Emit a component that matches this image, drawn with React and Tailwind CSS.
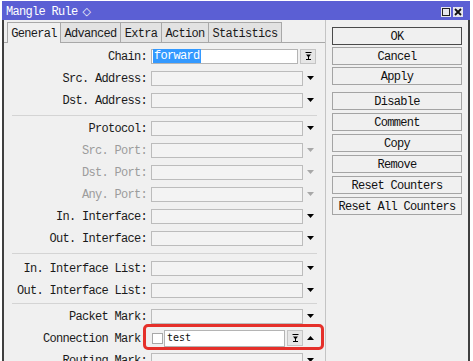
import React from "react";

const Down = ({ color = "#000" }) => (
  <svg width="7" height="4" viewBox="0 0 7 4"><path d="M0 0H7L3.5 4Z" fill={color} /></svg>
);
const Up = () => (
  <svg width="7" height="4" viewBox="0 0 7 4"><path d="M0 4H7L3.5 0Z" fill="#000" /></svg>
);
const DualIcon = () => (
  <svg width="7" height="8" viewBox="0 0 7 8">
    <rect x="0.5" y="0" width="6" height="1" fill="#000" />
    <path d="M1 2.5H6L3.5 5.5Z" fill="#000" />
    <rect x="3" y="5" width="1" height="2" fill="#000" />
    <rect x="1" y="7" width="5" height="1" fill="#000" />
  </svg>
);

function Row({ label, muted, children }) {
  return (
    <div className="flex h-[22px] items-center">
      <div className={muted ? "w-[143px] whitespace-pre pt-[1px] text-right text-[#9c9c9c]" : "w-[143px] whitespace-pre pt-[1px] text-right text-[#1a1a1a]"}>
        {label}
      </div>
      <div className="ml-[4px] flex items-center">{children}</div>
    </div>
  );
}

function DropField({ muted }) {
  return (
    <>
      <div className="h-[15px] w-[152px] border border-[#bcbcbc] bg-[#f3f3f3]" />
      <div className="flex w-[15px] justify-center">
        <Down color={muted ? "#a8a8a8" : "#000"} />
      </div>
    </>
  );
}

function Sep() {
  return <div className="mx-[8px] h-px bg-[#d4d4d4]" />;
}

function Btn({ children, def }) {
  return (
    <div
      className={
        def
          ? "flex h-[18px] w-[130px] items-center justify-center border border-[#4a4a4a] bg-[#f0f0f0] pt-[1px] text-[#111]"
          : "flex h-[18px] w-[130px] items-center justify-center border border-[#a4a4a4] bg-[#f0f0f0] pt-[1px] text-[#111]"
      }
    >
      {children}
    </div>
  );
}

export default function App() {
  return (
    <div className="relative h-[361px] w-[473px] overflow-hidden bg-white font-[family-name:'Liberation_Mono',monospace] text-[12px] leading-none tracking-[-0.7px] text-[#1a1a1a]">
      <div className="ml-[2px] mt-[1px] flex h-[400px] w-[468px] flex-col">
        {/* title bar */}
        <div className="flex h-[19px] items-center bg-[#5b5fd4] pl-[4px] pr-[7px] text-white">
          <span className="mt-[2px]">Mangle Rule</span>
          <span className="ml-[5px] mt-[1px] font-[family-name:'DejaVu_Sans',sans-serif] text-[11px] tracking-normal">◇</span>
          <div className="ml-auto mt-[3px] flex gap-[2px]">
            <div className="flex h-[10px] w-[10px] items-center justify-center bg-[#e6e6ee]">
              <div className="h-[8px] w-[8px] border border-[#222]" />
            </div>
            <div className="flex h-[10px] w-[10px] items-center justify-center bg-[#e6e6ee]">
              <svg width="8" height="8" viewBox="0 0 8 8">
                <path d="M1 1L7 7M7 1L1 7" stroke="#111" strokeWidth="1.8" />
              </svg>
            </div>
          </div>
        </div>

        {/* body */}
        <div className="flex flex-1 border-x-2 border-[#404040] bg-[#f0f0f0]">
          {/* left column */}
          <div className="w-[322px] border-r border-[#c4c4c4]">
            {/* tabs */}
            <div className="flex h-[23px] items-end">
              <div className="h-[21px] w-[3px] border-b border-[#a8a8a8]" />
              <div className="flex h-[21px] w-[54px] items-center justify-center border-l border-r border-t border-[#a8a8a8] bg-[#f0f0f0] pt-[1px]">General</div>
              <div className="flex h-[21px] w-[60px] items-center justify-center border-b border-r border-t border-[#a8a8a8] bg-[#e2e2e2] pt-[2px]">Advanced</div>
              <div className="flex h-[21px] w-[41px] items-center justify-center border-b border-r border-t border-[#a8a8a8] bg-[#e2e2e2] pt-[2px]">Extra</div>
              <div className="flex h-[21px] w-[47px] items-center justify-center border-b border-r border-t border-[#a8a8a8] bg-[#e2e2e2] pt-[2px]">Action</div>
              <div className="flex h-[21px] w-[73px] items-center justify-center border-b border-r border-t border-[#a8a8a8] bg-[#e2e2e2] pt-[2px]">Statistics</div>
              <div className="h-[21px] flex-1 border-b border-[#a8a8a8]" />
            </div>

            {/* group 1 */}
            <div className="pb-[4px] pt-[2px]">
              <Row label="Chain:">
                <div className="flex h-[15px] w-[147px] items-center border border-[#b4b4b4] bg-white pl-[1px]">
                  <span className="bg-[#3399ff] px-[1px] py-[1px] text-white">forward</span>
                </div>
                <div className="ml-[2px] flex h-[15px] w-[16px] items-center justify-center border border-[#c4c4c4] bg-[#e6e6e6]">
                  <DualIcon />
                </div>
              </Row>
              <Row label="Src. Address:"><DropField /></Row>
              <Row label="Dst. Address:"><DropField /></Row>
            </div>
            <Sep />

            {/* group 2 */}
            <div className="pb-[4px] pt-[1px]">
              <Row label="Protocol:"><DropField /></Row>
              <Row label="Src. Port:" muted><DropField muted /></Row>
              <Row label="Dst. Port:" muted><DropField muted /></Row>
              <Row label="Any. Port:" muted><DropField muted /></Row>
              <Row label="In. Interface:"><DropField /></Row>
              <Row label="Out. Interface:"><DropField /></Row>
            </div>
            <Sep />

            {/* group 3 */}
            <div className="pb-[2px] pt-[3px]">
              <Row label="In. Interface List:"><DropField /></Row>
              <Row label="Out. Interface List:"><DropField /></Row>
            </div>
            <Sep />

            {/* group 4 */}
            <div className="pt-[1px]">
              <Row label="Packet Mark:"><DropField /></Row>
              <Row label="Connection Mark:">
                <div className="ml-[1px] h-[11px] w-[11px] border border-[#a8a8a8] bg-white" />
                <div className="ml-[1px] flex h-[17px] w-[121px] items-center border border-[#b4b4b4] bg-white pl-[2px] font-[family-name:'DejaVu_Sans_Mono',monospace] text-[10px] tracking-normal text-[#111]">
                  test
                </div>
                <div className="ml-[2px] flex h-[16px] w-[16px] items-center justify-center border border-[#c4c4c4] bg-[#e6e6e6]">
                  <DualIcon />
                </div>
                <div className="flex w-[15px] justify-center">
                  <Up />
                </div>
              </Row>
              <Row label="Routing Mark:"><DropField /></Row>
            </div>
          </div>

          {/* right column */}
          <div className="flex flex-1 flex-col pl-[6px] pt-[7px]">
            <div className="flex flex-col gap-[2px]">
              <Btn def>OK</Btn>
              <Btn>Cancel</Btn>
              <Btn>Apply</Btn>
            </div>
            <div className="mt-[7px] flex flex-col gap-[3px]">
              <Btn>Disable</Btn>
              <Btn>Comment</Btn>
              <Btn>Copy</Btn>
              <Btn>Remove</Btn>
              <Btn>Reset Counters</Btn>
              <Btn>Reset All Counters</Btn>
            </div>
          </div>
        </div>
      </div>

      {/* red annotation */}
      <div className="absolute left-[143px] top-[324px] h-[26px] w-[181px] rounded-[5px] border-[3px] border-[#e5302a]" />
    </div>
  );
}
